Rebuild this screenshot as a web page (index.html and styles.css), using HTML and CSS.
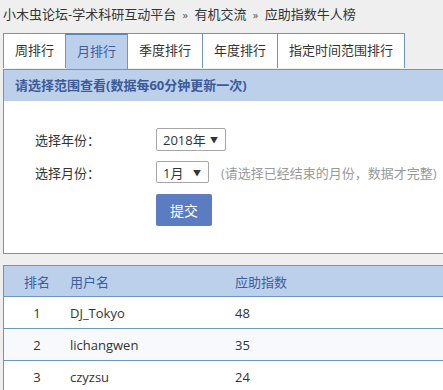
FILE: index.html
```html
<!DOCTYPE html>
<html lang="zh-CN">
<head>
  <meta charset="UTF-8">
  <title>应助指数牛人榜</title>
  <link rel="stylesheet" href="styles.css">
</head>
<body>
  <div class="crumbs">
    <a href="#">小木虫论坛-学术科研互动平台</a> <span class="sep">»</span> <a href="#">有机交流</a> <span class="sep">»</span> 应助指数牛人榜
  </div>

  <ul class="tabs">
    <li>周排行</li>
    <li class="active">月排行</li>
    <li>季度排行</li>
    <li>年度排行</li>
    <li>指定时间范围排行</li>
  </ul>

  <div class="panel">
    <div class="panel-head">请选择范围查看(数据每60分钟更新一次)</div>
    <form class="panel-body">
      <div class="row">
        <label>选择年份：</label>
        <span class="select year">2018年<i>▼</i></span>
      </div>
      <div class="row">
        <label>选择月份：</label>
        <span class="select month">1月<i>▼</i></span>
        <span class="hint">(请选择已经结束的月份，数据才完整)</span>
      </div>
      <div class="row">
        <label></label>
        <button type="button">提交</button>
      </div>
    </form>
  </div>

  <table class="rank">
    <thead>
      <tr><th class="no">排名</th><th class="user">用户名</th><th>应助指数</th></tr>
    </thead>
    <tbody>
      <tr><td class="no">1</td><td>DJ_Tokyo</td><td>48</td></tr>
      <tr class="alt"><td class="no">2</td><td>lichangwen</td><td>35</td></tr>
      <tr><td class="no">3</td><td>czyzsu</td><td>24</td></tr>
    </tbody>
  </table>
</body>
</html>
```

FILE: styles.css
```css
body {
  margin: 0;
  padding: 0 0 0 3px;
  background: #efefef;
  color: #333;
  font-family: "Open Sans", "Noto Sans CJK SC", sans-serif;
  font-size: 13px;
}
a {
  color: #333;
  text-decoration: none;
}
.crumbs {
  height: 33px;
  line-height: 28px;
}
.crumbs .sep {
  font-size: 11px;
  color: #555;
  margin: 0 3px;
}
.tabs {
  display: flex;
  margin: 0;
  padding: 0;
  list-style: none;
}
.tabs li {
  height: 34px;
  line-height: 33px;
  padding: 0 11px;
  background: #fff;
  border: 1px solid #6b96c2;
  border-bottom: none;
  border-left: none;
}
.tabs li:first-child {
  border-left: 1px solid #6b96c2;
}
.tabs li.active {
  background: #bcd0ec;
  color: #3d5d9e;
  border-top: 2px solid #5a86bb;
  line-height: 32px;
}
.panel {
  background: #fff;
  border: 1px solid #6b96c2;
  border-right: none;
}
.panel-head {
  height: 31px;
  line-height: 30px;
  padding-left: 11px;
  background: #bcd0ec;
  color: #3b5a98;
  font-weight: bold;
}
.panel-body {
  padding: 27px 0 27px 31px;
}
.row {
  display: flex;
  align-items: center;
  margin-bottom: 10px;
}
.row:last-child {
  margin-bottom: 0;
}
.row label {
  width: 121px;
}
.select {
  display: flex;
  justify-content: space-between;
  align-items: center;
  height: 21px;
  padding: 0 7px 0 6px;
  border: 1px solid #a6a6a6;
  border-radius: 2px;
}
.select i {
  font-style: normal;
  font-size: 8px;
}
.select.year {
  width: 55px;
}
.select.month {
  width: 38px;
  height: 20px;
}
.hint {
  margin-left: 12px;
  color: #999;
}
button {
  width: 56px;
  height: 32px;
  padding: 0;
  margin-top: 1px;
  border: none;
  border-radius: 2px;
  background: #5b7cc1;
  color: #fff;
  font-family: inherit;
  font-size: 14px;
}
.rank {
  width: 100%;
  margin-top: 11px;
  border-collapse: collapse;
  background: #fff;
  border-left: 1px solid #6b96c2;
}
.rank th {
  height: 30px;
  text-align: left;
  font-weight: normal;
  color: #3d5d9e;
  background: #bcd0ec;
  border-top: 1px solid #6b96c2;
  border-bottom: 1px solid #6b96c2;
  padding: 0;
}
.rank td {
  height: 31px;
  padding: 0;
  border-bottom: 1px solid #6b96c2;
}
.rank .no {
  width: 66px;
  text-align: center;
}
.rank .user {
  width: 165px;
}
.rank tr.alt td {
  background: #f7f9fc;
}
```
